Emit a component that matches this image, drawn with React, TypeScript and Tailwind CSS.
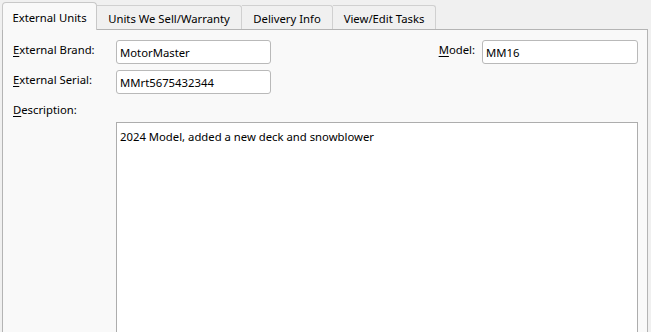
import React from 'react'

const TABS = [
  { label: 'External Units', w: 'w-[95px]' },
  { label: 'Units We Sell/Warranty', w: 'w-[145px]' },
  { label: 'Delivery Info', w: 'w-[91px]' },
  { label: 'View/Edit Tasks', w: 'w-[103px]' },
]

function Label({ k, rest }: { k: string; rest: string }) {
  return (
    <span className="text-black whitespace-nowrap">
      <span className="underline underline-offset-2">{k}</span>
      {rest}
    </span>
  )
}

function Field({ value, w = 'w-[155px]' }: { value: string; w?: string }) {
  return (
    <div className={`${w} h-[24px] bg-white border border-[#b9b9b9] rounded-[3px] pl-[3px] pt-[1px] flex items-center text-black`}>
      {value}
    </div>
  )
}

export default function App() {
  return (
    <div
      className="w-[651px] h-[332px] bg-[#f0f0f0] overflow-hidden text-[11.3px] leading-none"
      style={{ fontFamily: '"Segoe UI", "Noto Sans", Arial, sans-serif' }}
    >
      {/* tab strip */}
      <div className="flex items-end h-[29px] pl-[2px]">
        {TABS.map((t, i) =>
          i === 0 ? (
            <div
              key={t.label}
              className={`${t.w} relative z-10 h-[28px] mb-[-1px] pt-[3px] flex items-center justify-center bg-[#f9f9f9] border border-b-0 border-[#c8c8c8] rounded-t-[4px] text-black whitespace-nowrap`}
            >
              {t.label}
            </div>
          ) : (
            <div
              key={t.label}
              className={`${t.w} h-[24px] pt-[2px] flex items-center justify-center bg-[#f0f0f0] border border-b-0 border-l-0 border-[#d0d0d0] rounded-tr-[3px] text-black whitespace-nowrap`}
            >
              {t.label}
            </div>
          )
        )}
      </div>

      {/* panel */}
      <div className="ml-[2px] w-[646px] h-[400px] bg-[#f9f9f9] border border-[#b4b4b4] pt-[10px] pl-[10px] pr-[9px]">
        <div className="flex items-start">
          <div className="w-[103px] pt-[4px]">
            <Label k="E" rest="xternal Brand:" />
          </div>
          <Field value="MotorMaster" />
          <div className="ml-auto flex items-start gap-[7px]">
            <div className="pt-[4px]">
              <Label k="M" rest="odel:" />
            </div>
            <Field value="MM16" w="w-[156px]" />
          </div>
        </div>
        <div className="flex items-start mt-[6px]">
          <div className="w-[103px] pt-[4px]">
            <Label k="E" rest="xternal Serial:" />
          </div>
          <Field value="MMrt5675432344" />
        </div>
        <div className="mt-[9px] h-[15px] pt-[1px]">
          <Label k="D" rest="escription:" />
        </div>
        <div className="mt-[4px] ml-[103px] h-[300px] bg-white border border-[#adadad] pl-[3px] pt-[8px] text-black">
          2024 Model, added a new deck and snowblower
        </div>
      </div>
    </div>
  )
}
